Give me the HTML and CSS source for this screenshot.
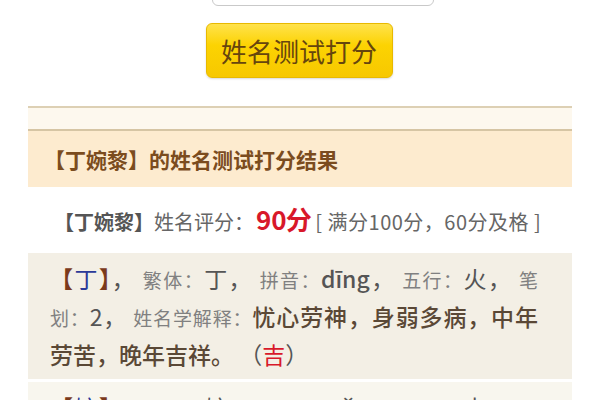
FILE: index.html
```html
<!DOCTYPE html>
<html lang="zh-CN">
<head>
    <meta charset="UTF-8">
    <meta name="viewport" content="width=device-width, initial-scale=1.0">
    <title>姓名测试打分</title>
    <link rel="stylesheet" href="styles.css">
</head>
<body>
    <div class="test-form">
        <div class="input-row">
            <input type="text" class="name-input" value="">
        </div>
        <div class="btn-row">
            <button type="button" class="test-btn">姓名测试打分</button>
        </div>
    </div>

    <div class="result">
        <div class="result-top"></div>
        <div class="result-title">【丁婉黎】的姓名测试打分结果</div>
        <div class="score-row">
            <span class="score-name">【丁婉黎】</span><span class="score-label">姓名评分：</span><span class="score-num">9<span class="overlap">0</span>分</span>
            <span class="score-note">[ 满分100分，60分及格 ]</span>
        </div>

        <div class="char-box">
            <span class="bracket">【</span><span class="char">丁</span><span class="bracket">】</span>， <span class="label">繁体：</span>丁， <span class="label">拼音：</span><span class="pinyin">dīng</span>， <span class="label">五行：</span>火， <span class="label">笔划：</span>2， <span class="label">姓名学解释：</span><span class="meaning">忧心劳神，身弱多病，中年劳苦，晚年吉祥。</span> （<span class="lucky">吉</span>）
        </div>
        <div class="char-box alt">
            <span class="bracket">【</span><span class="char">婉</span><span class="bracket">】</span>， <span class="label">繁体：</span>婉， <span class="label">拼音：</span><span class="pinyin">wǎn</span>， <span class="label">五行：</span>土， <span class="label">笔划：</span>11， <span class="label">姓名学解释：</span><span class="meaning">温和贤淑，多才巧智，中年成功隆昌。</span> （<span class="lucky">吉</span>）
        </div>
    </div>
</body>
</html>
```

FILE: styles.css
```css
* {
    box-sizing: border-box;
    margin: 0;
    padding: 0;
}

body {
    font-family: "Noto Sans CJK SC", "Noto Sans", sans-serif;
    background-color: #fff;
    color: #555;
    overflow: hidden;
}

.test-form {
    margin-top: -34px;
}

.input-row {
    padding-left: 212px;
}

.name-input {
    width: 222px;
    height: 40px;
    border: 1px solid #c9c9c9;
    border-radius: 6px;
    background-color: #fff;
}

.btn-row {
    display: flex;
    justify-content: center;
    margin-top: 17px;
    padding-right: 2px;
}

.test-btn {
    width: 187px;
    height: 55px;
    border: 1px solid #e8b900;
    border-radius: 6px;
    background: linear-gradient(#ffe24c, #fcd302 40%, #f7c800);
    color: #66450e;
    font-family: inherit;
    font-size: 26px;
    box-shadow: 0 1px 2px rgba(0, 0, 0, 0.15);
}

.result {
    margin: 28px 28px 0;
}

.result-top {
    height: 25px;
    border-top: 2px solid #ddd0b4;
    border-bottom: 2px solid #d6c5a4;
    background-color: #fdf8ee;
}

.result-title {
    height: 56px;
    padding-left: 16px;
    line-height: 56px;
    background-color: #fdebcf;
    color: #7b4c1e;
    font-size: 21px;
    font-weight: bold;
}

.score-row {
    height: 66px;
    padding-left: 26px;
    line-height: 64px;
    white-space: nowrap;
}

.score-name {
    font-size: 20px;
    font-weight: bold;
    color: #555;
}

.score-label {
    font-size: 20px;
    color: #666;
}

.score-num {
    font-size: 26px;
    font-weight: bold;
    color: #d8182a;
    margin-left: 2px;
}

.overlap {
    letter-spacing: -1px;
}

.score-note {
    font-size: 20px;
    color: #666;
    letter-spacing: 0.5px;
}

.char-box {
    padding: 7px 34px 6px 22px;
    margin-bottom: 3px;
    background-color: #f3efe5;
    font-size: 23px;
    line-height: 37px;
    text-align: justify;
    color: #555;
}

.char-box.alt {
    background-color: #f8f6ee;
}

.bracket {
    font-weight: bold;
    color: #7b3a1c;
}

.char {
    color: #2b3a98;
}

.label {
    font-size: 19px;
    color: #808080;
}

.pinyin {
    font-weight: 500;
    color: #555;
}

.meaning {
    font-weight: 500;
    color: #5a4836;
}

.lucky {
    color: #d8182a;
}
```
